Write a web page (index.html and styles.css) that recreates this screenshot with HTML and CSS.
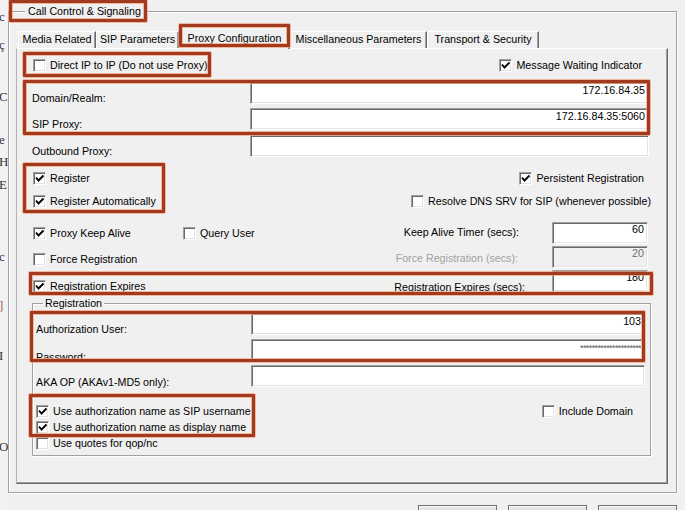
FILE: index.html
```html
<!DOCTYPE html>
<html>
<head>
<meta charset="utf-8">
<title>Proxy Configuration</title>
<link rel="stylesheet" href="styles.css">
</head>
<body>
<div class="screen">
  <div class="behind">
    <span class="gl g1">c</span>
    <span class="gl g2">ç</span>
    <span class="gl g3">C</span>
    <span class="gl g4">e</span>
    <span class="gl g5">H</span>
    <span class="gl g6">E</span>
    <span class="gl g7">c</span>
    <span class="gl g8">]</span>
    <span class="gl g9">I</span>
    <span class="gl g10">O</span>
  </div>
  <div class="dialog">
    <div class="group outer">
      <div class="gtitle outer-title">Call Control &amp; Signaling</div>
      <div class="tabs">
        <div class="tab t1">Media Related</div>
        <div class="tab t2">SIP Parameters</div>
        <div class="tab sel t3">Proxy Configuration</div>
        <div class="tab t4">Miscellaneous Parameters</div>
        <div class="tab t5">Transport &amp; Security</div>
      </div>
      <div class="page">
        <div class="row rowA">
          <div class="cb"><span class="box"></span>Direct IP to IP (Do not use Proxy)</div>
          <div class="cb mwi"><span class="box"><svg class="chk" viewBox="0 0 11 11"><path d="M2 4.5 L4.5 7.5 L9.5 2.5"/></svg></span>Message Waiting Indicator</div>
        </div>
        <div class="frow fr1"><span class="flabel">Domain/Realm:</span><div class="input wide">172.16.84.35</div></div>
        <div class="frow fr2"><span class="flabel">SIP Proxy:</span><div class="input wide">172.16.84.35:5060</div></div>
        <div class="frow fr3"><span class="flabel">Outbound Proxy:</span><div class="input wide"></div></div>

        <div class="row rowR1">
          <div class="cb"><span class="box"><svg class="chk" viewBox="0 0 11 11"><path d="M2 4.5 L4.5 7.5 L9.5 2.5"/></svg></span>Register</div>
          <div class="cb persist"><span class="box"><svg class="chk" viewBox="0 0 11 11"><path d="M2 4.5 L4.5 7.5 L9.5 2.5"/></svg></span>Persistent Registration</div>
        </div>
        <div class="row rowR2">
          <div class="cb"><span class="box"><svg class="chk" viewBox="0 0 11 11"><path d="M2 4.5 L4.5 7.5 L9.5 2.5"/></svg></span>Register Automatically</div>
          <div class="cb resolve"><span class="box"></span>Resolve DNS SRV for SIP (whenever possible)</div>
        </div>

        <div class="krow kr1">
          <div class="cb first"><span class="box"><svg class="chk" viewBox="0 0 11 11"><path d="M2 4.5 L4.5 7.5 L9.5 2.5"/></svg></span>Proxy Keep Alive</div>
          <div class="cb"><span class="box"></span>Query User</div>
          <span class="klabel">Keep Alive Timer (secs):</span>
          <div class="input small">60</div>
        </div>
        <div class="krow kr2">
          <div class="cb first"><span class="box"></span>Force Registration</div>
          <span class="klabel disabled">Force Registration (secs):</span>
          <div class="input small off">20</div>
        </div>
        <div class="krow kr3">
          <div class="cb first"><span class="box"><svg class="chk" viewBox="0 0 11 11"><path d="M2 4.5 L4.5 7.5 L9.5 2.5"/></svg></span>Registration Expires</div>
          <span class="klabel">Registration Expires (secs):</span>
          <div class="input small">180</div>
        </div>

        <div class="group reg">
          <div class="gtitle reg-title">Registration</div>
          <div class="arow ar1"><span class="alabel">Authorization User:</span><div class="input auth">103</div></div>
          <div class="arow ar2"><span class="alabel">Password:</span><div class="input auth pw">*********************</div></div>
          <div class="arow ar3"><span class="alabel">AKA OP (AKAv1-MD5 only):</span><div class="input auth"></div></div>
          <div class="crow cr1">
            <div class="cb"><span class="box"><svg class="chk" viewBox="0 0 11 11"><path d="M2 4.5 L4.5 7.5 L9.5 2.5"/></svg></span>Use authorization name as SIP username</div>
            <div class="cb incdom"><span class="box"></span>Include Domain</div>
          </div>
          <div class="crow">
            <div class="cb"><span class="box"><svg class="chk" viewBox="0 0 11 11"><path d="M2 4.5 L4.5 7.5 L9.5 2.5"/></svg></span>Use authorization name as display name</div>
          </div>
          <div class="crow">
            <div class="cb"><span class="box"></span>Use quotes for qop/nc</div>
          </div>
        </div>
      </div>
    </div>
    <div class="buttons">
      <div class="btn"></div>
      <div class="btn"></div>
      <div class="btn"></div>
    </div>
  </div>

  <div class="mark m1"></div>
  <div class="mark m2"></div>
  <div class="mark m3"></div>
  <div class="mark m4"></div>
  <div class="mark m5"></div>
  <div class="mark m6"></div>
  <div class="mark m7"></div>
  <div class="mark m8"></div>
</div>
</body>
</html>
```

FILE: styles.css
```css
* { box-sizing: border-box; margin: 0; padding: 0; }
html, body { width: 685px; height: 510px; overflow: hidden; background: #f0f0f0; }
body {
  font-family: "Liberation Sans", Arial, sans-serif;
  font-size: 10.7px;
  line-height: 13px;
  color: #000;
}
.screen { position: relative; display: flex; width: 685px; height: 510px; overflow: hidden; }

/* window behind, at the left edge */
.behind {
  width: 8px; flex: none; overflow: hidden;
  display: flex; flex-direction: column; align-items: flex-start;
  font-family: "Liberation Serif", serif; font-size: 13px; line-height: 14px; color: #333;
  background: #f2f2f2;
}
.gl { display: block; margin-left: -1px; }
.g1 { margin-top: 10px; }
.g2 { margin-top: 14px; }
.g3 { margin-top: 38px; }
.g4 { margin-top: 29px; }
.g5 { margin-top: 8px; }
.g6 { margin-top: 9px; }
.g7 { margin-top: 58px; }
.g8 { margin-top: 35px; color: #a55; }
.g9 { margin-top: 36px; }
.g10 { margin-top: 77px; }

.dialog { flex: 1; display: flex; flex-direction: column; }

/* group boxes */
.group {
  flex: none;
  display: flex; flex-direction: column; align-items: flex-start;
  border: 1px solid #a0a0a0;
  box-shadow: inset 1px 1px 0 #fff, 1px 1px 0 #fff;
}
.gtitle { flex: none; background: #f0f0f0; height: 14px; line-height: 14px; }
.outer { margin-top: 11px; width: 669px; height: 482px; padding: 0 8px 0 7px; }
.outer-title { margin: -8px 0 0 9px; padding: 0 3px; }

/* tabs */
.tabs { flex: none; display: flex; align-items: flex-end; height: 21px; margin-top: 9px; padding-left: 2px; }
.tab {
  flex: none; height: 17px; line-height: 15px; text-align: center;
  border-top: 1px solid #fff; border-left: 1px solid #fff; border-right: 1px solid #696969;
  box-shadow: inset -1px 0 0 #a0a0a0;
}
.t1 { width: 78px; }
.t2 { width: 83px; }
.t3 { width: 111px; }
.t4 { width: 137px; }
.t5 { width: 112px; }
.tab.sel {
  height: 22px; line-height: 20px; margin-bottom: -1px;
  background: #f0f0f0; position: relative; z-index: 2;
}

/* tab page */
.page {
  flex: none;
  width: 652px; height: 436px; padding-top: 9px;
  border-top: 1px solid #fff; border-left: 1px solid #b4b4b4;
  border-right: 1px solid #696969; border-bottom: 1px solid #696969;
  box-shadow: inset -1px -1px 0 #a0a0a0;
  display: flex; flex-direction: column;
}
.page > * { flex: none; }

/* checkboxes */
.cb { display: flex; align-items: center; gap: 4px; height: 13px; white-space: nowrap; }
.box {
  width: 13px; height: 13px; flex: none; background: #fff;
  border-top: 1px solid #a0a0a0; border-left: 1px solid #a0a0a0;
  border-right: 1px solid #fff; border-bottom: 1px solid #fff;
  box-shadow: inset 1px 1px 0 #696969, inset -1px -1px 0 #e3e3e3;
  display: flex; align-items: center; justify-content: center;
}
.chk { width: 11px; height: 11px; display: block; }
.chk path { fill: none; stroke: #000; stroke-width: 1.9; }

.row { display: flex; align-items: center; padding-left: 16px; }
.rowA { height: 15px; }
.mwi { margin-left: auto; margin-right: 25px; }
.rowR1 { height: 13px; margin-top: 15px; }
.rowR2 { height: 13px; margin-top: 10px; }
.persist { margin-left: auto; margin-right: 23px; }
.resolve { margin-left: auto; margin-right: 16px; }

/* text inputs */
.input {
  flex: none;
  height: 22px; background: #fff; text-align: right; white-space: nowrap; overflow: hidden;
  border-top: 1px solid #a0a0a0; border-left: 1px solid #a0a0a0;
  border-right: 1px solid #fff; border-bottom: 1px solid #fff;
  box-shadow: inset 1px 1px 0 #696969, inset -1px -1px 0 #e3e3e3;
  padding: 1px 3px 0 4px;
}
.frow { display: flex; height: 22px; padding-left: 15px; }
.fr1 { margin-top: 9px; }
.fr2 { margin-top: 4px; }
.fr3 { margin-top: 5px; }
.flabel { width: 218px; flex: none; margin-top: 10px; }
.wide { width: 399px; }

.krow { display: flex; align-items: flex-start; height: 22px; padding-left: 16px; }
.kr1 { margin-top: 14px; }
.kr2, .kr3 { margin-top: 2px; }
.krow .first { width: 150px; }
.kr1 .cb { margin-top: 5px; }
.kr2 .cb { margin-top: 7px; }
.kr3 .cb { margin-top: 10px; }
.klabel { margin-left: auto; white-space: nowrap; }
.kr1 .klabel { margin-top: 4px; margin-right: 33px; }
.kr2 .klabel { margin-top: 6px; margin-right: 34px; }
.kr3 .klabel { margin-top: 11px; margin-right: 27px; }
.klabel.disabled { color: #a0a0a0; }
.small { width: 96px; margin-right: 19px; padding-top: 0; }
.small.off { background: #f0f0f0; color: #6d6d6d; }

/* registration group */
.reg { margin: 11px 0 0 15px; width: 619px; height: 153px; }
.reg > * { flex: none; }
.reg-title { margin: -8px 0 0 10px; padding: 0 2px; }
.arow { display: flex; height: 22px; padding-left: 3px; }
.ar1 { margin-top: 3px; }
.ar2, .ar3 { margin-top: 4px; }
.alabel { width: 215px; flex: none; }
.ar1 .alabel { margin-top: 10px; }
.ar2 .alabel { margin-top: 12px; }
.ar3 .alabel { margin-top: 11px; }
.auth { width: 394px; }
.pw { font-size: 9px; color: #555; letter-spacing: -0.6px; padding-top: 2px; }
.crow { display: flex; align-items: center; height: 16px; padding-left: 3px; align-self: stretch; }
.cr1 { margin-top: 16px; }
.incdom { margin-left: auto; margin-right: 17px; }

/* buttons */
.buttons { flex: none; display: flex; justify-content: flex-end; gap: 11px; margin: 12px 8px 0 0; }
.btn {
  flex: none;
  width: 79px; height: 23px;
  background: #e5e5e5; border: 1px solid #707070; box-shadow: inset 1px 1px 0 #fafafa;
}

/* red annotation frames */
.mark {
  position: absolute; z-index: 5;
  border: 3px solid #a13a1e; border-radius: 1px;
  box-shadow: 0 0 0 1px rgba(240, 160, 120, 0.7), inset 0 0 0 1px rgba(240, 160, 120, 0.7);
}
.m1 { left: 9px; top: 0; width: 138px; height: 22px; }
.m2 { left: 179px; top: 24px; width: 111px; height: 23px; }
.m3 { left: 23px; top: 52px; width: 188px; height: 25px; }
.m4 { left: 23px; top: 80px; width: 627px; height: 55px; }
.m5 { left: 23px; top: 163px; width: 142px; height: 50px; }
.m6 { left: 29px; top: 272px; width: 624px; height: 23px; }
.m7 { left: 30px; top: 311px; width: 615px; height: 51px; }
.m8 { left: 29px; top: 394px; width: 226px; height: 43px; }
```
